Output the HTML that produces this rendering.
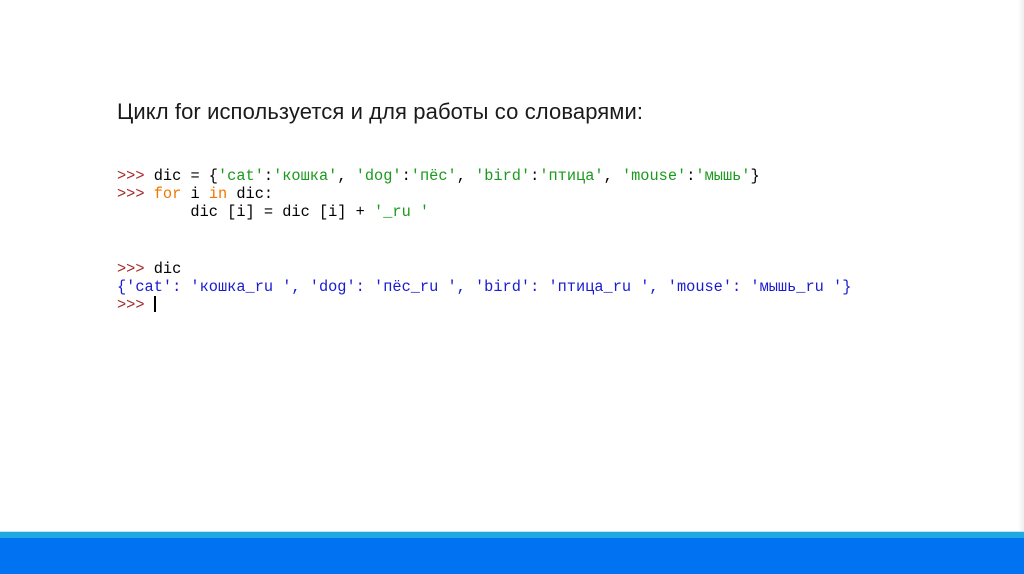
<!DOCTYPE html>
<html><head><meta charset="utf-8"><style>
html,body{margin:0;padding:0;width:1024px;height:574px;overflow:hidden;background:#fff;position:relative}
.t{position:absolute;left:117px;top:99px;font:22px "Liberation Sans",sans-serif;color:#1a1a1a;white-space:nowrap;letter-spacing:0.1px}
.c{position:absolute;left:117px;font:15.3px/18px "Liberation Mono",monospace;white-space:pre;color:#000}
.p{color:#a52a2a}.s{color:#1a9a1a}.k{color:#f07800}.b{color:#1a1ad0}
.cur{display:inline-block;width:2px;height:16px;background:#000;vertical-align:-3px}
.band1{position:absolute;left:0;top:531px;width:1024px;height:7px;background:#20a8e0;border-top:1px solid #bfe6f5}
.band2{position:absolute;left:0;top:538px;width:1024px;height:36px;background:#0072f2}
.sh{position:absolute;right:0;top:0;width:6px;height:531px;background:linear-gradient(to right,#fff,#eee)}
</style></head><body>
<div class="sh"></div>
<div class="t">Цикл for используется и для работы со словарями:</div>
<div class="c" style="top:167px"><span class="p">&gt;&gt;&gt;</span> dic = {<span class="s">'cat'</span>:<span class="s">'кошка'</span>, <span class="s">'dog'</span>:<span class="s">'пёс'</span>, <span class="s">'bird'</span>:<span class="s">'птица'</span>, <span class="s">'mouse'</span>:<span class="s">'мышь'</span>}
<span class="p">&gt;&gt;&gt;</span> <span class="k">for</span> i <span class="k">in</span> dic:
        dic [i] = dic [i] + <span class="s">'_ru '</span></div>
<div class="c" style="top:260px"><span class="p">&gt;&gt;&gt;</span> dic
<span class="b">{'cat': 'кошка_ru ', 'dog': 'пёс_ru ', 'bird': 'птица_ru ', 'mouse': 'мышь_ru '}</span>
<span class="p">&gt;&gt;&gt;</span> <span class="cur"></span></div>
<div class="band1"></div><div class="band2"></div>
</body></html>
